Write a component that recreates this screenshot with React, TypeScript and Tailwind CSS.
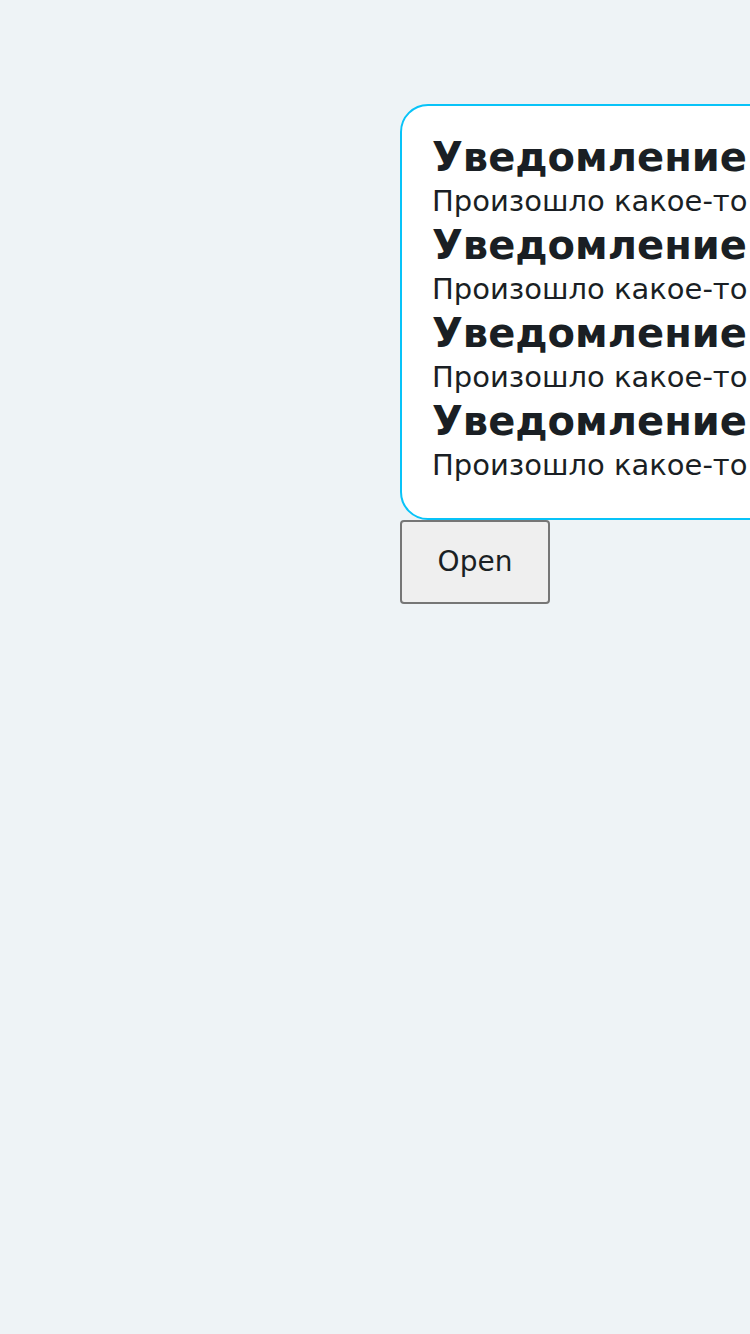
const items = [1, 2, 3, 4];

export default function App() {
  return (
    <div className="min-h-screen w-full overflow-hidden bg-[#eef3f6] font-['DejaVu_Sans',sans-serif] text-[#1a1f24]">
      <div className="flex flex-col items-start pl-[400px] pt-[104px]">
        <div className="w-[600px] shrink-0 rounded-[28px] border-2 border-[#08c3f8] bg-white px-[30px] pt-[26px] pb-[34px]">
          {items.map((i) => (
            <div key={i}>
              <div className="text-[40px] font-bold leading-[50px]">Уведомление</div>
              <div className="text-[29px] leading-[38px]">Произошло какое-то</div>
            </div>
          ))}
        </div>
        <button className="h-[84px] w-[150px] rounded-[4px] border-2 border-[#767676] bg-[#efefef] text-[28px]">
          Open
        </button>
      </div>
    </div>
  );
}
